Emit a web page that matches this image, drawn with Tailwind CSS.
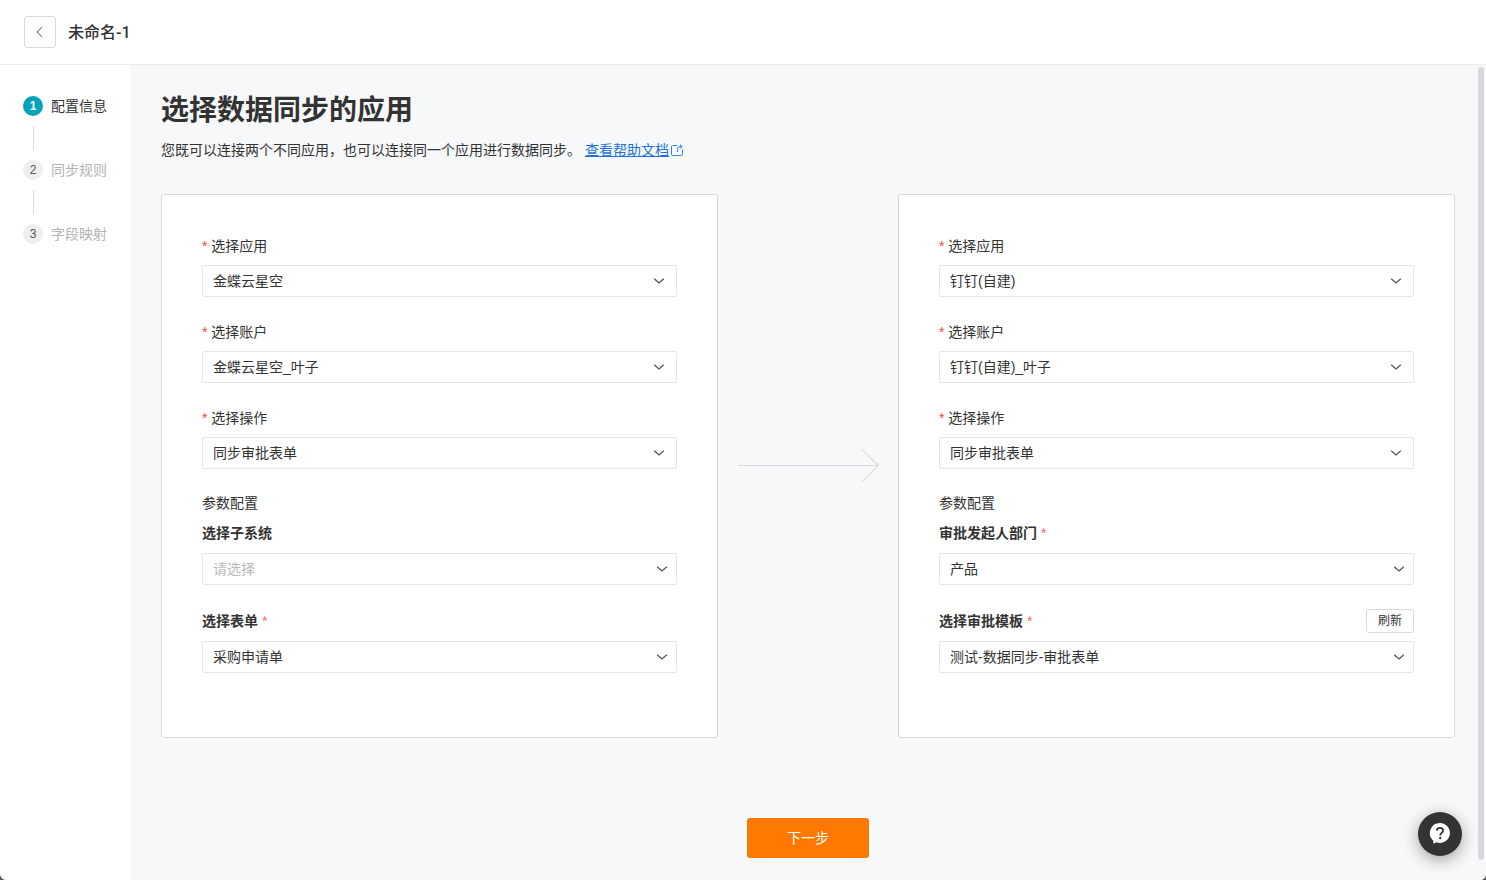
<!DOCTYPE html>
<html lang="zh-CN">
<head>
    <meta charset="UTF-8">
    <meta name="viewport" content="width=device-width, initial-scale=1.0">
    <title>未命名-1</title>
    <script src="https://cdn.jsdelivr.net/npm/@tailwindcss/browser@4"></script>
</head>
<body class="bg-[#555555] font-['Liberation_Sans','Noto_Sans_CJK_SC',sans-serif] text-sm text-[#333333]">
    <!-- 图标 -->
    <svg class="hidden">
        <symbol id="chevron" viewBox="0 0 12 8"><path d="M1.2 1.7L6 6L10.8 1.7" fill="none" stroke="#555555" stroke-width="1.3"/></symbol>
    </svg>

    <div class="relative min-h-screen flex flex-col bg-white rounded-b-md overflow-hidden">
        <header class="h-[65px] flex items-center gap-3 px-6 border-b border-[#ebebeb]">
            <button type="button" aria-label="返回" class="size-8 flex items-center justify-center border border-[#d8d9dc] rounded-[3px]">
                <svg class="w-2 h-3" viewBox="0 0 8 12" fill="none" stroke="#555555"><path d="M6.3 1L1 6L6.3 11"/></svg>
            </button>
            <h1 class="pt-0.5 font-['Roboto','Noto_Sans_CJK_SC',sans-serif] text-base font-medium">未命名-1</h1>
        </header>

        <div class="flex-1 flex">
            <!-- 步骤 -->
            <aside class="w-[130px] shrink-0 pt-[31px] pl-[23px]">
                <ol class="flex flex-col gap-[10px]">
                    <li class="flex items-center gap-2 h-5">
                        <span class="size-5 rounded-full bg-[#05a3b8] text-white text-xs font-bold flex items-center justify-center">1</span>
                        <span>配置信息</span>
                    </li>
                    <li aria-hidden="true" class="ml-[10px] w-px h-6 bg-[#d8d9dc]"></li>
                    <li class="flex items-center gap-2 h-5">
                        <span class="size-5 rounded-full bg-[#eeeeee] text-[#555555] text-xs flex items-center justify-center">2</span>
                        <span class="text-[#b3b3b3]">同步规则</span>
                    </li>
                    <li aria-hidden="true" class="ml-[10px] w-px h-6 bg-[#d8d9dc]"></li>
                    <li class="flex items-center gap-2 h-5">
                        <span class="size-5 rounded-full bg-[#eeeeee] text-[#555555] text-xs flex items-center justify-center">3</span>
                        <span class="text-[#b3b3b3]">字段映射</span>
                    </li>
                </ol>
            </aside>

            <main class="flex-1 bg-[#f7f8fa] px-[31px] pt-[26px] pb-[22px]">
                <h2 class="text-[28px] leading-10 font-bold">选择数据同步的应用</h2>
                <p class="mt-2 flex items-center gap-1 leading-[22px]">
                    <span>您既可以连接两个不同应用，也可以连接同一个应用进行数据同步。</span>
                    <a href="#" class="flex items-center gap-0.5 text-[#1a73d9]">
                        <span class="underline">查看帮助文档</span>
                        <svg class="size-3" viewBox="0 0 12 12" fill="none" stroke="#2f80ff"><path d="M6 1.5H1.5Q.5 1.5 .5 2.5V10.5Q.5 11.5 1.5 11.5H10.5Q11.5 11.5 11.5 10.5V5.5M6.5 8V5.5Q6.5 2.5 9 2.5H11M9 .5L11.3 2.5L9 4.5"/></svg>
                    </a>
                </p>

                <form id="sync-form" class="mt-[33px] flex">
                    <!-- 源应用 -->
                    <section class="flex-1 bg-white border border-[#d8d9dc] rounded-[3px] p-10">
                        <div class="flex flex-col gap-6">
                            <div class="flex flex-col gap-2">
                                <label for="src-app" class="leading-[22px]"><span class="text-[#f5483b]">*</span> 选择应用</label>
                                <div class="relative">
                                    <select id="src-app" class="appearance-none block w-full h-8 pl-[10px] pr-8 bg-white border border-[#e5e5e5] rounded-[2px]"><option>金蝶云星空</option></select>
                                    <svg class="absolute right-3 top-3 w-3 h-2 pointer-events-none"><use href="#chevron"/></svg>
                                </div>
                            </div>
                            <div class="flex flex-col gap-2">
                                <label for="src-account" class="leading-[22px]"><span class="text-[#f5483b]">*</span> 选择账户</label>
                                <div class="relative">
                                    <select id="src-account" class="appearance-none block w-full h-8 pl-[10px] pr-8 bg-white border border-[#e5e5e5] rounded-[2px]"><option>金蝶云星空_叶子</option></select>
                                    <svg class="absolute right-3 top-3 w-3 h-2 pointer-events-none"><use href="#chevron"/></svg>
                                </div>
                            </div>
                            <div class="flex flex-col gap-2">
                                <label for="src-action" class="leading-[22px]"><span class="text-[#f5483b]">*</span> 选择操作</label>
                                <div class="relative">
                                    <select id="src-action" class="appearance-none block w-full h-8 pl-[10px] pr-8 bg-white border border-[#e5e5e5] rounded-[2px]"><option>同步审批表单</option></select>
                                    <svg class="absolute right-3 top-3 w-3 h-2 pointer-events-none"><use href="#chevron"/></svg>
                                </div>
                            </div>
                            <div class="flex flex-col gap-[10px]">
                                <h3 class="leading-5">参数配置</h3>
                                <label for="src-system" class="leading-5 font-bold">选择子系统</label>
                                <div class="relative">
                                    <select id="src-system" class="appearance-none block w-full h-8 pl-[10px] pr-8 bg-white border border-[#e5e5e5] rounded-[2px] text-[#b8b8b8]"><option>请选择</option></select>
                                    <svg class="absolute right-[9px] top-3 w-3 h-2 pointer-events-none"><use href="#chevron"/></svg>
                                </div>
                            </div>
                            <div class="flex flex-col gap-2 pb-6">
                                <label for="src-form" class="leading-6 font-bold">选择表单 <span class="text-[#f56c6c] font-normal">*</span></label>
                                <div class="relative">
                                    <select id="src-form" class="appearance-none block w-full h-8 pl-[10px] pr-8 bg-white border border-[#e5e5e5] rounded-[2px]"><option>采购申请单</option></select>
                                    <svg class="absolute right-[9px] top-3 w-3 h-2 pointer-events-none"><use href="#chevron"/></svg>
                                </div>
                            </div>
                        </div>
                    </section>

                    <div class="w-[180px] shrink-0 flex items-center justify-center">
                        <svg class="w-[142px] h-[34px]" viewBox="0 0 142 34" fill="none"><path d="M1 16.5H142" stroke="#d8d9dc"/><path d="M125 .5L141.3 16.5L125 32.5" stroke="#e0e1e3" stroke-width="1.3"/></svg>
                    </div>

                    <!-- 目标应用 -->
                    <section class="flex-1 bg-white border border-[#d8d9dc] rounded-[3px] p-10">
                        <div class="flex flex-col gap-6">
                            <div class="flex flex-col gap-2">
                                <label for="dst-app" class="leading-[22px]"><span class="text-[#f5483b]">*</span> 选择应用</label>
                                <div class="relative">
                                    <select id="dst-app" class="appearance-none block w-full h-8 pl-[10px] pr-8 bg-white border border-[#e5e5e5] rounded-[2px]"><option>钉钉(自建)</option></select>
                                    <svg class="absolute right-3 top-3 w-3 h-2 pointer-events-none"><use href="#chevron"/></svg>
                                </div>
                            </div>
                            <div class="flex flex-col gap-2">
                                <label for="dst-account" class="leading-[22px]"><span class="text-[#f5483b]">*</span> 选择账户</label>
                                <div class="relative">
                                    <select id="dst-account" class="appearance-none block w-full h-8 pl-[10px] pr-8 bg-white border border-[#e5e5e5] rounded-[2px]"><option>钉钉(自建)_叶子</option></select>
                                    <svg class="absolute right-3 top-3 w-3 h-2 pointer-events-none"><use href="#chevron"/></svg>
                                </div>
                            </div>
                            <div class="flex flex-col gap-2">
                                <label for="dst-action" class="leading-[22px]"><span class="text-[#f5483b]">*</span> 选择操作</label>
                                <div class="relative">
                                    <select id="dst-action" class="appearance-none block w-full h-8 pl-[10px] pr-8 bg-white border border-[#e5e5e5] rounded-[2px]"><option>同步审批表单</option></select>
                                    <svg class="absolute right-3 top-3 w-3 h-2 pointer-events-none"><use href="#chevron"/></svg>
                                </div>
                            </div>
                            <div class="flex flex-col gap-[10px]">
                                <h3 class="leading-5">参数配置</h3>
                                <label for="dst-dept" class="leading-5 font-bold">审批发起人部门 <span class="text-[#f56c6c] font-normal">*</span></label>
                                <div class="relative">
                                    <select id="dst-dept" class="appearance-none block w-full h-8 pl-[10px] pr-8 bg-white border border-[#e5e5e5] rounded-[2px]"><option>产品</option></select>
                                    <svg class="absolute right-[9px] top-3 w-3 h-2 pointer-events-none"><use href="#chevron"/></svg>
                                </div>
                            </div>
                            <div class="flex flex-col gap-2 pb-6">
                                <div class="flex items-center justify-between">
                                    <label for="dst-template" class="leading-6 font-bold">选择审批模板 <span class="text-[#f56c6c] font-normal">*</span></label>
                                    <button type="button" class="w-12 h-6 flex items-center justify-center border border-[#d8d9dc] rounded-[3px] text-xs">刷新</button>
                                </div>
                                <div class="relative">
                                    <select id="dst-template" class="appearance-none block w-full h-8 pl-[10px] pr-8 bg-white border border-[#e5e5e5] rounded-[2px]"><option>测试-数据同步-审批表单</option></select>
                                    <svg class="absolute right-[9px] top-3 w-3 h-2 pointer-events-none"><use href="#chevron"/></svg>
                                </div>
                            </div>
                        </div>
                    </section>
                </form>

                <div class="mt-20 flex justify-center">
                    <button type="submit" form="sync-form" class="w-[122px] h-10 rounded-[3px] bg-[#ff7800] text-white">下一步</button>
                </div>
            </main>
        </div>

        <!-- 滚动条 -->
        <div class="absolute top-[67px] right-0.5 bottom-5 w-1.5 rounded-full bg-[#d8d9dc]"></div>
    </div>

    <!-- 帮助 -->
    <button type="button" aria-label="帮助" class="fixed right-6 bottom-6 size-11 rounded-full bg-[#333333] flex items-center justify-center shadow-[0_4px_16px_rgba(0,0,0,0.35)]">
        <svg class="size-6" viewBox="0 0 24 24">
            <path d="M12 1A10 10 0 1 1 8 20.2Q6.8 21.4 5.2 21.6Q5.6 20.2 5.2 18.4A10 10 0 0 1 12 1Z" fill="#fff"/>
            <path d="M8.8 8.6Q9 5.9 12 5.9Q15.1 5.9 15.1 8.5Q15.1 9.8 13.6 10.9Q12.2 11.8 12.2 13.6" fill="none" stroke="#333333" stroke-width="1.8"/>
            <circle cx="12.2" cy="16" r="1.2" fill="#333333"/>
        </svg>
    </button>
</body>
</html>
